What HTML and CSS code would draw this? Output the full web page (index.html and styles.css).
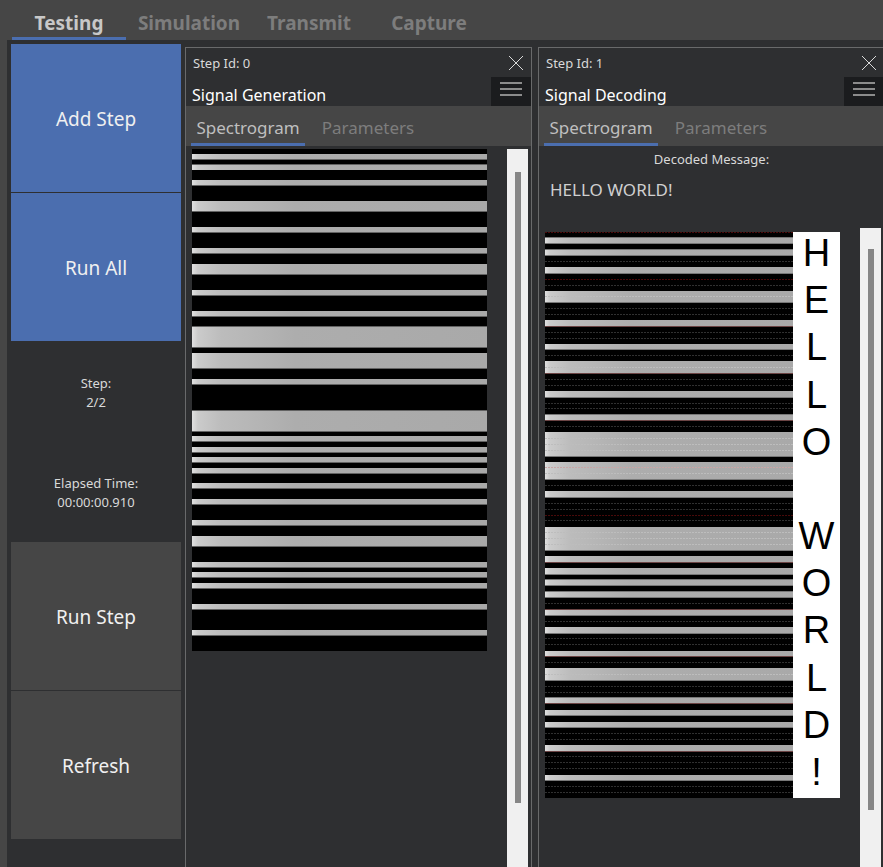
FILE: index.html
```html
<!DOCTYPE html>
<html lang="en">
<head>
<meta charset="utf-8">
<title>Signal Testing</title>
<link rel="stylesheet" href="styles.css">
</head>
<body>
<nav class="tabs main-tabs">
  <button class="tab active" type="button">Testing</button>
  <button class="tab" type="button">Simulation</button>
  <button class="tab" type="button">Transmit</button>
  <button class="tab" type="button">Capture</button>
</nav>
<main class="workspace">
  <aside class="sidebar">
    <button class="action primary" type="button">Add Step</button>
    <button class="action primary" type="button">Run All</button>
    <div class="status"><span>Step:</span><span>2/2</span></div>
    <div class="status"><span>Elapsed Time:</span><span>00:00:00.910</span></div>
    <button class="action" type="button">Run Step</button>
    <button class="action" type="button">Refresh</button>
  </aside>
  <div class="steps">
    <section class="panel">
      <header class="panel-head">
        <span class="step-id">Step Id: 0</span>
        <button class="close" type="button" aria-label="Close"><svg width="16" height="16" viewBox="0 0 16 16"><path d="M1 1L15 15M15 1L1 15"/></svg></button>
        <h2 class="title">Signal Generation</h2>
        <button class="menu" type="button" aria-label="Menu"><svg width="22" height="16" viewBox="0 0 22 16"><path d="M0 2H22M0 8H22M0 14H22"/></svg></button>
      </header>
      <nav class="tabs">
        <button class="tab active" type="button">Spectrogram</button>
        <button class="tab" type="button">Parameters</button>
      </nav>
      <div class="view">
        <svg class="spectrogram" width="295" height="502" viewBox="0 0 295 502">
          <defs>
            <linearGradient id="tone-a" gradientUnits="userSpaceOnUse" x1="0" y1="0" x2="295" y2="0">
              <stop offset="0" stop-color="#e0e0e0"/><stop offset=".02" stop-color="#cbcbcb"/><stop offset=".1" stop-color="#bcbcbc"/><stop offset=".35" stop-color="#adadad"/><stop offset="1" stop-color="#a9a9a9"/>
            </linearGradient>
          </defs>
          <rect width="295" height="502" fill="#000"/>
          <path fill="url(#tone-a)" d="M0 5h295v5H0zM0 16h295v5H0zM0 31h295v5H0zM0 52h295v10H0zM0 78h295v5H0zM0 99h295v5H0zM0 115h295v10H0zM0 141h295v5H0zM0 162h295v5H0zM0 178h295v20H0zM0 204h295v15H0zM0 230h295v5H0zM0 262h295v20H0zM0 287h295v5H0zM0 298h295v5H0zM0 308h295v5H0zM0 319h295v5H0zM0 334h295v5H0zM0 350h295v5H0zM0 371h295v5H0zM0 387h295v10H0zM0 413h295v5H0zM0 423h295v5H0zM0 434h295v5H0zM0 455h295v5H0zM0 481h295v5H0z"/>
          <path stroke="#636363" d="M0 10.5h295M0 15.5h295M0 36.5h295M0 62.5h295M0 83.5h295M0 104.5h295M0 125.5h295M0 146.5h295M0 167.5h295M0 177.5h295M0 198.5h295M0 219.5h295M0 235.5h295M0 261.5h295M0 282.5h295M0 292.5h295M0 303.5h295M0 313.5h295M0 324.5h295M0 339.5h295M0 355.5h295M0 376.5h295M0 397.5h295M0 418.5h295M0 428.5h295M0 439.5h295M0 460.5h295M0 486.5h295"/>
        </svg>
        <div class="scrollbar"><div class="thumb"></div></div>
      </div>
    </section>
    <section class="panel">
      <header class="panel-head">
        <span class="step-id">Step Id: 1</span>
        <button class="close" type="button" aria-label="Close"><svg width="16" height="16" viewBox="0 0 16 16"><path d="M1 1L15 15M15 1L1 15"/></svg></button>
        <h2 class="title">Signal Decoding</h2>
        <button class="menu" type="button" aria-label="Menu"><svg width="22" height="16" viewBox="0 0 22 16"><path d="M0 2H22M0 8H22M0 14H22"/></svg></button>
      </header>
      <nav class="tabs">
        <button class="tab active" type="button">Spectrogram</button>
        <button class="tab" type="button">Parameters</button>
      </nav>
      <div class="decoded">
        <label for="message">Decoded Message:</label>
        <input id="message" type="text" value="HELLO WORLD!" readonly>
      </div>
      <div class="view decoding">
        <svg class="spectrogram" width="248" height="566" viewBox="0 0 248 566">
          <defs>
            <linearGradient id="tone-b" gradientUnits="userSpaceOnUse" x1="0" y1="0" x2="248" y2="0">
              <stop offset="0" stop-color="#e0e0e0"/><stop offset=".02" stop-color="#cbcbcb"/><stop offset=".1" stop-color="#bcbcbc"/><stop offset=".35" stop-color="#adadad"/><stop offset="1" stop-color="#a9a9a9"/>
            </linearGradient>
          </defs>
          <rect width="248" height="566" fill="#000"/>
          <path fill="url(#tone-b)" d="M0 6h248v5H0zM0 18h248v5H0zM0 35h248v6H0zM0 59h248v11H0zM0 88h248v6H0zM0 112h248v5H0zM0 129h248v12H0zM0 159h248v6H0zM0 183h248v5H0zM0 200h248v24H0zM0 230h248v17H0zM0 259h248v6H0zM0 295h248v23H0zM0 324h248v6H0zM0 336h248v6H0zM0 348h248v5H0zM0 360h248v5H0zM0 378h248v5H0zM0 395h248v6H0zM0 419h248v5H0zM0 436h248v12H0zM0 466h248v5H0zM0 478h248v5H0zM0 490h248v5H0zM0 513h248v6H0zM0 543h248v5H0z"/>
          <path stroke="#777" d="M0 5.5h248M0 11.5h248M0 17.5h248M0 23.5h248M0 41.5h248M0 70.5h248M0 117.5h248M0 165.5h248M0 182.5h248M0 224.5h248M0 247.5h248M0 265.5h248M0 318.5h248M0 342.5h248M0 347.5h248M0 353.5h248M0 359.5h248M0 365.5h248M0 383.5h248M0 401.5h248M0 448.5h248M0 465.5h248M0 483.5h248M0 495.5h248M0 548.5h248"/>
          <path stroke="#6b4444" d="M0 94.5h248M0 141.5h248M0 188.5h248M0 330.5h248M0 377.5h248M0 424.5h248M0 471.5h248M0 519.5h248"/>
          <path stroke="#303030" stroke-dasharray="2 1" d="M0 29.5h248M0 53.5h248M0 76.5h248M0 82.5h248M0 100.5h248M0 106.5h248M0 123.5h248M0 147.5h248M0 153.5h248M0 171.5h248M0 176.5h248M0 194.5h248M0 253.5h248M0 271.5h248M0 277.5h248M0 288.5h248M0 371.5h248M0 389.5h248M0 406.5h248M0 412.5h248M0 430.5h248M0 454.5h248M0 460.5h248M0 501.5h248M0 507.5h248M0 524.5h248M0 530.5h248M0 536.5h248M0 554.5h248M0 560.5h248"/>
          <path stroke="#4a0a0a" stroke-dasharray="2 1" d="M0 .5h248M0 47.5h248M0 283.5h248"/>
          <path stroke="#bdbdbd" stroke-dasharray="2 1" d="M0 64.5h248M0 135.5h248M0 206.5h248M0 212.5h248M0 218.5h248M0 241.5h248M0 300.5h248M0 306.5h248M0 312.5h248M0 442.5h248"/>
          <path stroke="#c9a5a5" stroke-dasharray="2 1" d="M0 235.5h248"/>
        </svg>
        <div class="letters"><span>H</span><span>E</span><span>L</span><span>L</span><span>O</span><span></span><span>W</span><span>O</span><span>R</span><span>L</span><span>D</span><span>!</span></div>
        <div class="scrollbar"><div class="thumb"></div></div>
      </div>
    </section>
  </div>
</main>
</body>
</html>
```
FILE: styles.css
```css
* { box-sizing: border-box; }
body {
  margin: 0;
  height: 100vh;
  display: flex;
  flex-direction: column;
  overflow: hidden;
  background: #464646;
  color: #d9d9d9;
  font-family: "Noto Sans", "Open Sans", sans-serif;
  font-size: 13px;
}
button {
  margin: 0;
  padding: 0;
  border: 0;
  background: none;
  color: inherit;
  font: inherit;
}
svg { display: block; }

.tabs {
  display: flex;
  gap: 6px;
  height: 40px;
  flex: none;
  padding-left: 5px;
  background: #464646;
}
.tab {
  width: 114px;
  padding-top: 6px;
  border-bottom: 3px solid transparent;
  color: #7d7d7d;
  font-size: 17px;
  white-space: nowrap;
}
.tab.active {
  border-color: #4b6eaf;
  color: #bfbfbf;
}
.main-tabs { padding-left: 12px; }
.main-tabs .tab {
  padding-top: 8px;
  font-size: 19px;
  font-weight: bold;
}
.main-tabs .active { color: #c8c8c8; }

.workspace {
  flex: 1;
  min-height: 0;
  display: flex;
  gap: 4px;
  margin-left: 7px;
  padding-left: 4px;
  background: #2e2f31;
}
.sidebar {
  flex: none;
  width: 170px;
  display: flex;
  flex-direction: column;
  gap: 1px;
  padding-top: 4px;
}
.action {
  flex: none;
  height: 148px;
  padding-top: 2px;
  background: #464646;
  color: #f0f0f0;
  font-size: 19px;
}
.action.primary { background: #4b6eaf; }
.status {
  height: 99px;
  display: flex;
  flex-direction: column;
  align-items: center;
  justify-content: center;
  padding-top: 2px;
  line-height: 19px;
}

.steps {
  flex: 1;
  min-width: 0;
  display: flex;
  gap: 6px;
  margin-right: -2px;
  padding-top: 7px;
}
.panel {
  flex: 1;
  min-width: 0;
  display: flex;
  flex-direction: column;
  border: 1px solid #696a6b;
  border-bottom: 0;
}
.panel-head {
  flex: none;
  display: grid;
  grid-template-columns: 1fr 40px;
  grid-template-rows: 29px 29px;
  align-items: center;
  padding-left: 6px;
}
.step-id { padding-left: 1px; }
.title {
  margin: 0;
  padding-top: 6px;
  color: #fff;
  font-size: 16px;
  font-weight: normal;
  line-height: 22px;
}
.close {
  justify-self: end;
  padding-right: 7px;
}
.close path { stroke: #d9d9d9; stroke-width: 1; }
.menu {
  height: 29px;
  padding: 0 9px 5px;
  background: #1b1c1e;
}
.menu path { stroke: #8c8c8c; stroke-width: 2; }

.view {
  flex: 1;
  min-height: 0;
  display: flex;
  align-items: flex-start;
  margin-top: 3px;
  padding: 0 3px 0 6px;
}
.spectrogram { flex: none; }
.scrollbar {
  align-self: stretch;
  flex: none;
  display: flex;
  justify-content: center;
  width: 21px;
  margin-left: auto;
  padding: 23px 0 64px;
  background: #f0f0f0;
}
.thumb {
  width: 6px;
  background: #868686;
}

.decoded {
  flex: none;
  height: 82px;
  display: flex;
  flex-direction: column;
  padding: 4px 6px 0;
  text-align: center;
}
.decoded label { line-height: 19px; }
.decoded input {
  width: 100%;
  height: 40px;
  margin: 0;
  padding: 0 5px;
  border: 0;
  outline: 0;
  background: transparent;
  color: #d0d0d0;
  font-family: inherit;
  font-size: 17px;
}
.decoding { margin-top: 0; }
.decoding .spectrogram, .letters { margin-top: 4px; }
.decoding .scrollbar { padding: 21px 0 57px; }
.letters {
  flex: none;
  display: grid;
  grid-template-rows: repeat(12, 1fr);
  width: 47px;
  height: 566px;
  background: #fff;
  color: #000;
  font-family: "Liberation Sans", Arial, sans-serif;
  font-size: 38px;
  line-height: 43px;
  text-align: center;
}
```
